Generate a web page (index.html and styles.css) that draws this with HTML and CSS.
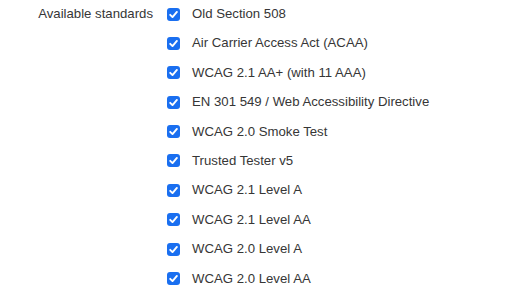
FILE: index.html
```html
<!DOCTYPE html>
<html lang="en">
<head>
	<meta charset="UTF-8">
	<title>Standards</title>
	<link rel="stylesheet" href="styles.css">
</head>
<body>
	<div class="field">
		<div class="field-label">Available standards</div>
		<ul class="standards">
			<li><span class="check"><svg viewBox="0 0 13 13"><path d="M3.2 6.8 L5.5 9.1 L9.9 3.9" /></svg></span>Old Section 508</li>
			<li><span class="check"><svg viewBox="0 0 13 13"><path d="M3.2 6.8 L5.5 9.1 L9.9 3.9" /></svg></span>Air Carrier Access Act (ACAA)</li>
			<li><span class="check"><svg viewBox="0 0 13 13"><path d="M3.2 6.8 L5.5 9.1 L9.9 3.9" /></svg></span>WCAG 2.1 AA+ (with 11 AAA)</li>
			<li><span class="check"><svg viewBox="0 0 13 13"><path d="M3.2 6.8 L5.5 9.1 L9.9 3.9" /></svg></span>EN 301 549 / Web Accessibility Directive</li>
			<li><span class="check"><svg viewBox="0 0 13 13"><path d="M3.2 6.8 L5.5 9.1 L9.9 3.9" /></svg></span>WCAG 2.0 Smoke Test</li>
			<li><span class="check"><svg viewBox="0 0 13 13"><path d="M3.2 6.8 L5.5 9.1 L9.9 3.9" /></svg></span>Trusted Tester v5</li>
			<li><span class="check"><svg viewBox="0 0 13 13"><path d="M3.2 6.8 L5.5 9.1 L9.9 3.9" /></svg></span>WCAG 2.1 Level A</li>
			<li><span class="check"><svg viewBox="0 0 13 13"><path d="M3.2 6.8 L5.5 9.1 L9.9 3.9" /></svg></span>WCAG 2.1 Level AA</li>
			<li><span class="check"><svg viewBox="0 0 13 13"><path d="M3.2 6.8 L5.5 9.1 L9.9 3.9" /></svg></span>WCAG 2.0 Level A</li>
			<li><span class="check"><svg viewBox="0 0 13 13"><path d="M3.2 6.8 L5.5 9.1 L9.9 3.9" /></svg></span>WCAG 2.0 Level AA</li>
		</ul>
	</div>
</body>
</html>
```

FILE: styles.css
```css
*{
	margin: 0;
	padding: 0;
}
body{
	background: #fff;
	font-family: "Liberation Sans", Arial, sans-serif;
	font-size: 13.2px;
	color: #363636;
}
.field{
	display: flex;
	gap: 14px;
	padding-top: 4px;
}
.field-label{
	width: 153px;
	text-align: right;
	line-height: 20px;
}
.standards{
	list-style: none;
}
.standards li{
	display: flex;
	align-items: center;
	height: 20px;
	margin-bottom: 9.4px;
	line-height: 20px;
}
.check{
	display: block;
	width: 13px;
	height: 13px;
	border-radius: 3px;
	background: #1a6ff0;
	margin-right: 12px;
}
.check svg{
	display: block;
	width: 13px;
	height: 13px;
}
.check path{
	fill: none;
	stroke: #fff;
	stroke-width: 1.9;
	stroke-linecap: round;
	stroke-linejoin: round;
}
```
